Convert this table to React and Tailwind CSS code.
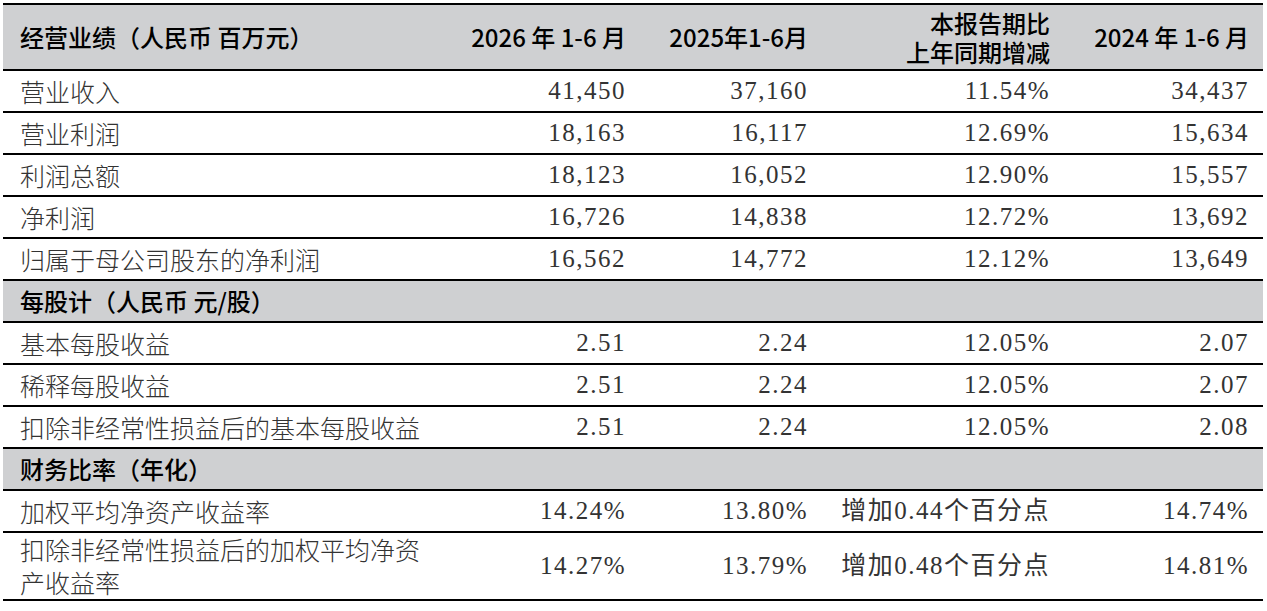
const SANS = { fontFamily: '"Noto Sans CJK SC", sans-serif' };

const sections = [
  {
    rows: [
      ["营业收入", "41,450", "37,160", "11.54%", "34,437"],
      ["营业利润", "18,163", "16,117", "12.69%", "15,634"],
      ["利润总额", "18,123", "16,052", "12.90%", "15,557"],
      ["净利润", "16,726", "14,838", "12.72%", "13,692"],
      ["归属于母公司股东的净利润", "16,562", "14,772", "12.12%", "13,649"],
    ],
  },
  {
    title: "每股计（人民币 元/股）",
    rows: [
      ["基本每股收益", "2.51", "2.24", "12.05%", "2.07"],
      ["稀释每股收益", "2.51", "2.24", "12.05%", "2.07"],
      ["扣除非经常性损益后的基本每股收益", "2.51", "2.24", "12.05%", "2.08"],
    ],
  },
  {
    title: "财务比率（年化）",
    rows: [
      ["加权平均净资产收益率", "14.24%", "13.80%", "增加0.44个百分点", "14.74%"],
      ["扣除非经常性损益后的加权平均净资产收益率", "14.27%", "13.79%", "增加0.48个百分点", "14.81%", true],
    ],
  },
];

const cellNum = "pr-[14px] text-right tracking-[1.5px] font-['Liberation_Serif','Noto_Sans_CJK_SC',serif]";

function Row({ row }) {
  const [label, a, b, c, d, tall] = row;
  return (
    <tr className={`border-b-2 border-black text-[25px] text-[#333] ${tall ? "h-[68px]" : "h-[42px]"}`}>
      <td className="pl-[17px] align-middle leading-[33px] font-light" style={SANS}>
        {tall ? (
          <>
            <div>扣除非经常性损益后的加权平均净资</div>
            <div>产收益率</div>
          </>
        ) : (
          label
        )}
      </td>
      <td className={cellNum}>{a}</td>
      <td className={cellNum}>{b}</td>
      <td className={`${cellNum} tracking-[0.5px]`}>{c}</td>
      <td className={cellNum}>{d}</td>
    </tr>
  );
}

export default function App() {
  return (
    <div className="w-[1267px] h-[611px] bg-white pt-[3px] pl-[3px]">
      <table className="w-[1260px] table-fixed border-collapse border-t-2 border-black">
        <colgroup>
          <col className="w-[447px]" />
          <col className="w-[190px]" />
          <col className="w-[182px]" />
          <col className="w-[242px]" />
          <col className="w-[199px]" />
        </colgroup>
        <thead>
          <tr className="h-[66px] bg-[#cfd0d2] border-b-2 border-black text-[24px] font-medium text-black" style={SANS}>
            <th className="pl-[17px] text-left font-medium">经营业绩（人民币 百万元）</th>
            <th className="pr-[14px] text-right font-medium">2026 年 1-6 月</th>
            <th className="pr-[14px] text-right font-medium">2025年1-6月</th>
            <th className="pr-[14px] text-right font-medium">
              <div className="h-[29px] leading-[29px]">本报告期比</div>
              <div className="h-[29px] leading-[29px]">上年同期增减</div>
            </th>
            <th className="pr-[14px] text-right font-medium">2024 年 1-6 月</th>
          </tr>
        </thead>
        <tbody>
          {sections.map((s, i) => (
            <>
              {s.title && (
                <tr key={`t${i}`} className="h-[42px] bg-[#cfd0d2] border-b-2 border-black">
                  <td colSpan={5} className="pl-[17px] text-[24px] font-medium text-black" style={SANS}>
                    {s.title}
                  </td>
                </tr>
              )}
              {s.rows.map((r) => (
                <Row key={r[0]} row={r} />
              ))}
            </>
          ))}
        </tbody>
      </table>
    </div>
  );
}
